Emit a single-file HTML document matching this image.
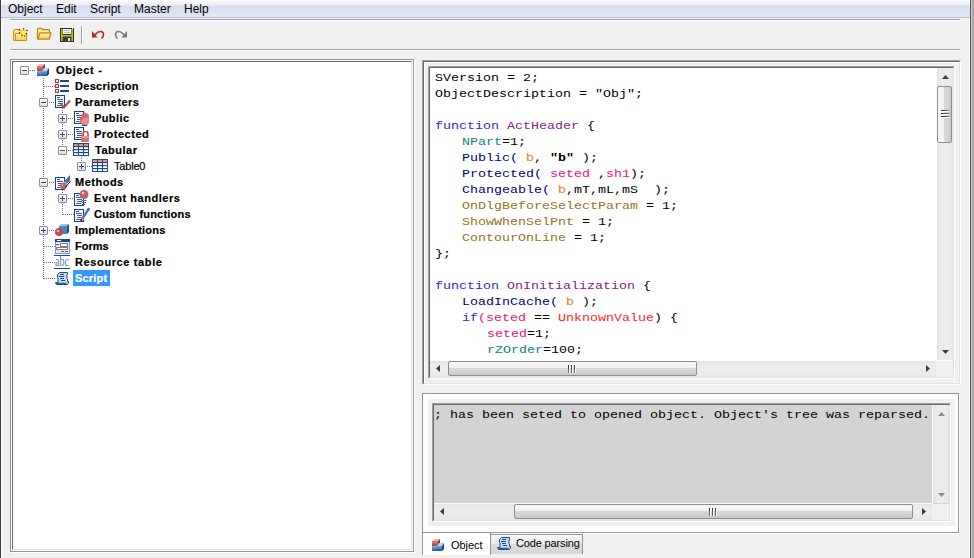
<!DOCTYPE html>
<html><head><meta charset="utf-8">
<style>
*{box-sizing:border-box;margin:0;padding:0}
html,body{width:974px;height:558px;overflow:hidden;background:#f0f0f0;position:relative;font-family:"Liberation Sans",sans-serif}
.a{position:absolute}
.menu{left:1px;top:0;width:969px;height:17px;background:linear-gradient(#fbfbfd 0px,#eceef7 5px,#d8ddee 6px,#dde2f2 11px,#e1e6f5 16px)}
.menub{left:1px;top:17px;width:969px;height:1px;background:#b9c0d2}
.mi{position:absolute;top:1px;font-size:12px;line-height:16px;color:#000;white-space:pre}
.sepg{background:#a0a0a0;height:1px}
.sepw{background:#fff;height:1px}
.sunk{border-style:solid;border-width:1px;border-color:#696969 #e3e3e3 #e3e3e3 #696969}
.sunko{border-style:solid;border-width:1px;border-color:#a0a0a0 #fff #fff #a0a0a0}
.code{font-family:"Liberation Mono",monospace;font-size:13.33px;line-height:16px;white-space:pre;color:#000}
.tr{position:absolute;font-size:11px;font-weight:bold;line-height:16px;white-space:pre;color:#000;letter-spacing:0;-webkit-text-stroke:0.2px currentColor}
.exp{position:absolute;width:9px;height:9px;border:1px solid #8f8f8f;border-radius:1px;background:linear-gradient(#fff,#f4f4f4 50%,#dcdcdc)}
.exp:before{content:"";position:absolute;left:1px;top:3px;width:5px;height:1px;background:#2c4b9a}
.exp.p:after{content:"";position:absolute;left:3px;top:1px;width:1px;height:5px;background:#2c4b9a}
.dv{position:absolute;width:1px;background-image:linear-gradient(#777 50%,transparent 50%);background-size:1px 2px}
.dh{position:absolute;height:1px;background-image:linear-gradient(90deg,#777 50%,transparent 50%);background-size:2px 1px}
.vtr{position:absolute;width:16px;background:linear-gradient(90deg,#e2e2e2 0,#e7e7e7 1px,#ebebeb 4px,#ececec 9px,#eaeaea 14px,#e4e4e4 16px)}
.htr{position:absolute;height:16px;background:linear-gradient(#e2e2e2 0,#e7e7e7 1px,#ebebeb 4px,#ececec 9px,#eaeaea 14px,#e4e4e4 16px)}
.vth{position:absolute;width:15px;border:1px solid #8e8e8e;border-radius:2px;background:linear-gradient(90deg,#f8f8f8 0,#efefef 45%,#d9d9d9 46%,#d0d0d0 85%,#c6c6c6 100%)}
.hth{position:absolute;height:15px;border:1px solid #8e8e8e;border-radius:2px;background:linear-gradient(#f8f8f8 0,#efefef 45%,#d9d9d9 46%,#d0d0d0 85%,#c6c6c6 100%)}
.gripv{position:absolute;width:8px;height:1px;background:linear-gradient(90deg,#2a2a2a,#7a7a7a);box-shadow:0 1px 0 #fff}
.griph{position:absolute;width:1px;height:8px;background:linear-gradient(#2a2a2a,#7a7a7a);box-shadow:1px 0 0 #fff}
.arr{position:absolute;overflow:visible}
.tab{position:absolute;font-size:11px;line-height:13px;white-space:pre;color:#000}
.ico{position:absolute;width:16px;height:16px;overflow:visible}
</style></head><body>
<svg width="0" height="0" style="position:absolute"><defs>
<linearGradient id="gr" x1="0" y1="0" x2="0" y2="1"><stop offset="0" stop-color="#d98484"/><stop offset="1" stop-color="#a84444"/></linearGradient>
<linearGradient id="gb" x1="0" y1="0" x2="0" y2="1"><stop offset="0" stop-color="#86b4e4"/><stop offset="1" stop-color="#28589c"/></linearGradient>
<linearGradient id="gb2" x1="0" y1="0" x2="0" y2="1"><stop offset="0" stop-color="#78a8dc"/><stop offset="1" stop-color="#1f4c90"/></linearGradient>
<linearGradient id="fy" x1="0" y1="0" x2="0" y2="1"><stop offset="0" stop-color="#fff3b8"/><stop offset="1" stop-color="#f4c94e"/></linearGradient>
</defs></svg>
<!-- window edges -->
<div class="a" style="left:0;top:0;width:1px;height:558px;background:#404040"></div>
<div class="a" style="left:1px;top:0;width:1px;height:558px;background:#fafafa"></div>
<div class="a" style="left:969px;top:0;width:1px;height:558px;background:#f6f6f6"></div>
<div class="a" style="left:970px;top:0;width:1px;height:558px;background:#5a5a5a"></div>
<div class="a" style="left:971px;top:0;width:1px;height:558px;background:#c8c8c8"></div>
<div class="a" style="left:972px;top:0;width:2px;height:558px;background:#a8a8a8"></div>

<!-- menu -->
<div class="a menu"></div>
<div class="a menub"></div>
<div class="mi" style="left:8px">Object</div>
<div class="mi" style="left:56px">Edit</div>
<div class="mi" style="left:90px">Script</div>
<div class="mi" style="left:134px">Master</div>
<div class="mi" style="left:184px">Help</div>

<!-- toolbar separators -->
<div class="a sepg" style="left:10px;top:19px;width:950px"></div>
<div class="a sepw" style="left:10px;top:20px;width:951px"></div>
<div class="a sepg" style="left:10px;top:49px;width:950px"></div>
<div class="a sepw" style="left:10px;top:50px;width:951px"></div>
<div class="a" style="left:81px;top:26px;width:1px;height:18px;background:#a0a0a0"></div>
<div class="a" style="left:82px;top:26px;width:1px;height:18px;background:#fff"></div>

<!-- TOOLBAR ICONS -->
<svg class="ico" style="left:12px;top:26px" viewBox="0 0 16 16"><path d="M1.5 14.5V5q0-1.5 1.5-1.5h3l1 1h4v10z" fill="#fbe39a" stroke="#c7901c"/><path d="M3.5 14.5V7.5h11v7z" fill="url(#fy)" stroke="#c7901c"/><path d="M11.5 3.5v6.5M8 6.5h7M9 4l5 5M14 4l-5 5" stroke="#ffe800" stroke-width="1.4"/><circle cx="11.5" cy="6.5" r="1.6" fill="#fff45a"/><circle cx="7.2" cy="3.6" r=".75" fill="#223"/><circle cx="11.5" cy="3" r=".75" fill="#223"/><circle cx="15" cy="4.5" r=".75" fill="#223"/><circle cx="14.5" cy="7.8" r=".75" fill="#223"/><circle cx="10" cy="9.6" r=".75" fill="#223"/><circle cx="12.6" cy="10" r=".7" fill="#445"/><circle cx="7.5" cy="6.8" r=".7" fill="#445"/></svg>
<svg class="ico" style="left:36px;top:25px" viewBox="0 0 16 16"><path d="M1.5 14V4.5q0-1.2 1.2-1.2h2.8l1.2 1.4h5.8q1 0 1 1V8" fill="#fde9a0" stroke="#c38a14" stroke-width="1.3"/><path d="M4 7.8h11l-1.8 6.4H1.8z" fill="url(#fy)" stroke="#c38a14" stroke-width="1.3" stroke-linejoin="round"/></svg>
<svg class="ico" style="left:59px;top:27px" viewBox="0 0 16 16"><rect x="1" y="1" width="14" height="14" fill="#2a2a2a"/><rect x="2" y="2" width="1.6" height="12" fill="#c4bd10"/><rect x="12.4" y="2" width="1.6" height="12" fill="#c4bd10"/><rect x="2" y="8" width="12" height="1.6" fill="#c4bd10"/><rect x="4" y="2" width="8" height="5" fill="#f2f6f6"/><path d="M5 3.5h6M5 5.5h6" stroke="#a9c4c8"/><rect x="4" y="10" width="8" height="5" fill="#3c3c3c"/><rect x="9" y="11" width="2" height="3" fill="#d8ecf0"/><rect x="13" y="1" width="1" height="1" fill="#eee"/></svg>
<svg class="ico" style="left:91px;top:27px" viewBox="0 0 16 16"><polygon points="1,4 1,10.5 6.5,10.5" fill="#b52a2a"/><path d="M4 8Q6.5 4.5 9.5 4.5Q12.5 4.5 12.5 7.5Q12.5 10 10.5 11.5" stroke="#b52a2a" stroke-width="1.6" fill="none"/></svg>
<svg class="ico" style="left:113px;top:27px" viewBox="0 0 16 16"><polygon points="14,4 14,10.5 8.5,10.5" fill="#777"/><path d="M11 8Q8.5 4.5 5.5 4.5Q2.5 4.5 2.5 7.5Q2.5 10 4.5 11.5" stroke="#808080" stroke-width="1.6" fill="none"/></svg>

<!-- tree panel -->
<div class="a" style="left:10px;top:59px;width:404px;height:493px;border:1px solid #8d95a2;background:#fff;box-shadow:1px 1px 0 #fff"></div>
<div class="a sunk" style="left:12px;top:61px;width:400px;height:489px;background:#fff"></div>

<!-- TREE -->
<div class="dv" style="left:43px;top:78px;height:201px"></div>
<div class="dv" style="left:62px;top:108px;height:43px"></div>
<div class="dv" style="left:62px;top:188px;height:27px"></div>
<div class="dv" style="left:81px;top:156px;height:11px"></div>
<div class="dh" style="left:30px;top:70px;width:6px"></div>
<div class="dh" style="left:44px;top:86px;width:11px"></div>
<div class="dh" style="left:49px;top:102px;width:6px"></div>
<div class="dh" style="left:68px;top:118px;width:6px"></div>
<div class="dh" style="left:68px;top:134px;width:6px"></div>
<div class="dh" style="left:68px;top:150px;width:6px"></div>
<div class="dh" style="left:87px;top:166px;width:6px"></div>
<div class="dh" style="left:49px;top:182px;width:6px"></div>
<div class="dh" style="left:68px;top:198px;width:6px"></div>
<div class="dh" style="left:63px;top:214px;width:11px"></div>
<div class="dh" style="left:49px;top:230px;width:6px"></div>
<div class="dh" style="left:44px;top:246px;width:11px"></div>
<div class="dh" style="left:44px;top:262px;width:11px"></div>
<div class="dh" style="left:44px;top:278px;width:11px"></div>
<div class="exp" style="left:20px;top:66px"></div>
<svg class="ico" style="left:36px;top:62px" viewBox="0 0 16 16"><polygon points="1,4 3,2 9,2 7,4" fill="#efb8b8"/><rect x="1" y="4" width="6" height="5" fill="url(#gr)"/><polygon points="7,4 9,2 9,7 7,9" fill="#8e3434"/><rect x="1" y="9" width="6" height="5" fill="url(#gb)"/><polygon points="6,9 8,6 13,6 11,9" fill="#b4d4f2"/><rect x="6" y="9" width="5" height="5" fill="url(#gb2)"/><polygon points="11,9 13,6 13,12 11,14" fill="#173f7e"/></svg>
<div class="tr" style="left:56px;top:62px;letter-spacing:0.71px;">Object -</div>
<svg class="ico" style="left:55px;top:78px" viewBox="0 0 16 16"><rect x="0.5" y="1.5" width="3" height="3" fill="#f4dede" stroke="#a63a3a"/><rect x="5" y="2" width="9" height="2" fill="#1f4a8a"/><rect x="0.5" y="6.5" width="3" height="3" fill="#f4dede" stroke="#a63a3a"/><rect x="5" y="7" width="9" height="2" fill="#1f4a8a"/><rect x="0.5" y="11.5" width="3" height="3" fill="#f4dede" stroke="#a63a3a"/><rect x="5" y="12" width="9" height="2" fill="#1f4a8a"/></svg>
<div class="tr" style="left:75px;top:78px;letter-spacing:0.3px;">Description</div>
<div class="exp" style="left:39px;top:98px"></div>
<svg class="ico" style="left:55px;top:94px" viewBox="0 0 16 16"><rect x="0.5" y="1.5" width="9" height="12" fill="#f4f8fd" stroke="#1d3d7c"/><path d="M2 3.5h3M2 5.5h6M3 7.5h5M3 9.5h5M2 11.5h5" stroke="#3461ad" fill="none"/><path d="M6 10l3 3.5 6-7" stroke="#b84a58" stroke-width="2" fill="none"/></svg>
<div class="tr" style="left:75px;top:94px;letter-spacing:0.44px;">Parameters</div>
<div class="exp p" style="left:58px;top:114px"></div>
<svg class="ico" style="left:74px;top:110px" viewBox="0 0 16 16"><rect x="0.5" y="1.5" width="9" height="12" fill="#f4f8fd" stroke="#1d3d7c"/><path d="M2 3.5h3M2 5.5h6M3 7.5h5M3 9.5h5M2 11.5h5" stroke="#3461ad" fill="none"/><path d="M6.5 9.5V7.5h1.5V10V4.5a.8.8 0 0 1 1.6 0V8V3.5a.8.8 0 0 1 1.6 0V8V4a.8.8 0 0 1 1.6 0V8V5a.8.8 0 0 1 1.6 0V12q0 2.5-2 3H9q-2-.5-2.5-3z" fill="#ea8c8c" stroke="#c85656" stroke-width="0.7"/><rect x="8" y="15" width="5" height="1" fill="#1f4a8a"/></svg>
<div class="tr" style="left:94px;top:110px;letter-spacing:0.4px;">Public</div>
<div class="exp p" style="left:58px;top:130px"></div>
<svg class="ico" style="left:74px;top:126px" viewBox="0 0 16 16"><rect x="0.5" y="1.5" width="9" height="12" fill="#f4f8fd" stroke="#1d3d7c"/><path d="M2 3.5h3M2 5.5h6M3 7.5h5M3 9.5h5M2 11.5h5" stroke="#3461ad" fill="none"/><path d="M9 10.5V8a2.5 2.5 0 0 1 5 0v2.5" stroke="#c25a5a" stroke-width="1.7" fill="none"/><rect x="7" y="10" width="8" height="6" rx="1" fill="#d97474"/><rect x="7" y="10" width="8" height="2" fill="#e89696"/></svg>
<div class="tr" style="left:94px;top:126px;letter-spacing:0.5px;">Protected</div>
<div class="exp" style="left:58px;top:146px"></div>
<svg class="ico" style="left:74px;top:142px" viewBox="0 0 16 16"><rect x="-1" y="1" width="16" height="13" fill="#1f4a8a"/><rect x="0" y="2" width="4" height="2" fill="#f28a7e"/><rect x="5" y="2" width="4" height="2" fill="#f28a7e"/><rect x="10" y="2" width="4" height="2" fill="#f28a7e"/><rect x="0" y="5" width="4" height="1" fill="#cfe0f3"/><rect x="0" y="6" width="4" height="1" fill="#fff"/><rect x="5" y="5" width="4" height="1" fill="#cfe0f3"/><rect x="5" y="6" width="4" height="1" fill="#fff"/><rect x="10" y="5" width="4" height="1" fill="#cfe0f3"/><rect x="10" y="6" width="4" height="1" fill="#fff"/><rect x="0" y="8" width="4" height="1" fill="#cfe0f3"/><rect x="0" y="9" width="4" height="1" fill="#fff"/><rect x="5" y="8" width="4" height="1" fill="#cfe0f3"/><rect x="5" y="9" width="4" height="1" fill="#fff"/><rect x="10" y="8" width="4" height="1" fill="#cfe0f3"/><rect x="10" y="9" width="4" height="1" fill="#fff"/><rect x="0" y="11" width="4" height="1" fill="#cfe0f3"/><rect x="0" y="12" width="4" height="1" fill="#fff"/><rect x="5" y="11" width="4" height="1" fill="#cfe0f3"/><rect x="5" y="12" width="4" height="1" fill="#fff"/><rect x="10" y="11" width="4" height="1" fill="#cfe0f3"/><rect x="10" y="12" width="4" height="1" fill="#fff"/></svg>
<div class="tr" style="left:95px;top:142px;letter-spacing:0.5px;">Tabular</div>
<div class="exp p" style="left:77px;top:162px"></div>
<svg class="ico" style="left:93px;top:158px" viewBox="0 0 16 16"><rect x="-1" y="1" width="16" height="13" fill="#1f4a8a"/><rect x="0" y="2" width="4" height="2" fill="#f28a7e"/><rect x="5" y="2" width="4" height="2" fill="#f28a7e"/><rect x="10" y="2" width="4" height="2" fill="#f28a7e"/><rect x="0" y="5" width="4" height="1" fill="#cfe0f3"/><rect x="0" y="6" width="4" height="1" fill="#fff"/><rect x="5" y="5" width="4" height="1" fill="#cfe0f3"/><rect x="5" y="6" width="4" height="1" fill="#fff"/><rect x="10" y="5" width="4" height="1" fill="#cfe0f3"/><rect x="10" y="6" width="4" height="1" fill="#fff"/><rect x="0" y="8" width="4" height="1" fill="#cfe0f3"/><rect x="0" y="9" width="4" height="1" fill="#fff"/><rect x="5" y="8" width="4" height="1" fill="#cfe0f3"/><rect x="5" y="9" width="4" height="1" fill="#fff"/><rect x="10" y="8" width="4" height="1" fill="#cfe0f3"/><rect x="10" y="9" width="4" height="1" fill="#fff"/><rect x="0" y="11" width="4" height="1" fill="#cfe0f3"/><rect x="0" y="12" width="4" height="1" fill="#fff"/><rect x="5" y="11" width="4" height="1" fill="#cfe0f3"/><rect x="5" y="12" width="4" height="1" fill="#fff"/><rect x="10" y="11" width="4" height="1" fill="#cfe0f3"/><rect x="10" y="12" width="4" height="1" fill="#fff"/></svg>
<div class="tr" style="left:114px;top:158px;letter-spacing:-0.2px;font-weight:normal;">Table0</div>
<div class="exp" style="left:39px;top:178px"></div>
<svg class="ico" style="left:55px;top:174px" viewBox="0 0 16 16"><rect x="0.5" y="3.5" width="9" height="12" fill="#f4f8fd" stroke="#1d3d7c"/><path d="M2 5.5h3M2 7.5h6M3 9.5h5M3 11.5h5M2 13.5h5" stroke="#3461ad" fill="none"/><path d="M15 1L15 6.5L12 9.5L9.5 7z" fill="#3d6cb4"/><path d="M9.5 7L12 9.5L10.5 11L8 8.5z" fill="#3cc4c8"/><path d="M8 8.5L10.5 11L9.5 12L7 9.5z" fill="#eef6f6"/><circle cx="8.5" cy="12" r="3.2" fill="#c65e5e"/><circle cx="7.5" cy="11" r="1" fill="#e9a0a0"/><path d="M10.5 13.5L15.5 7" stroke="#111" stroke-width="1"/></svg>
<div class="tr" style="left:75px;top:174px;letter-spacing:0.5px;">Methods</div>
<div class="exp p" style="left:58px;top:194px"></div>
<svg class="ico" style="left:74px;top:190px" viewBox="0 0 16 16"><rect x="0.5" y="3.5" width="9" height="12" fill="#f4f8fd" stroke="#1d3d7c"/><path d="M2 5.5h3M2 7.5h6M3 9.5h5M3 11.5h5M2 13.5h5" stroke="#3461ad" fill="none"/><path d="M7.5 10.5h5M7.5 12.5h4.5M8 14.5h3" stroke="#3d6db0" stroke-width="1.2"/><circle cx="10" cy="4.5" r="4.5" fill="#c46262"/><circle cx="9" cy="3" r="1.3" fill="#f4d0d0"/></svg>
<div class="tr" style="left:94px;top:190px;letter-spacing:0.54px;">Event handlers</div>
<svg class="ico" style="left:74px;top:206px" viewBox="0 0 16 16"><rect x="0.5" y="3.5" width="9" height="12" fill="#f4f8fd" stroke="#1d3d7c"/><path d="M2 5.5h3M2 7.5h6M3 9.5h5M3 11.5h5M2 13.5h5" stroke="#3461ad" fill="none"/><path d="M7 12.5L14 1.5L16 3L9 14z" fill="#4a78b8"/><path d="M14 1.5L16 3L16 4.5z" fill="#2a4f8a"/><path d="M7 12.5L9 14L6.2 15.5z" fill="#111"/><path d="M7.3 11L10 13.2L9 14.5L6.5 12.3z" fill="#f08888"/></svg>
<div class="tr" style="left:94px;top:206px;letter-spacing:0.2px;">Custom functions</div>
<div class="exp p" style="left:39px;top:226px"></div>
<svg class="ico" style="left:55px;top:222px" viewBox="0 0 16 16"><polygon points="4,4 6,2 14,2 12,4" fill="#9ec2ea"/><rect x="4" y="4" width="8" height="8" fill="#4f82c0"/><polygon points="12,4 14,2 14,10 12,12" fill="#21508f"/><circle cx="4" cy="10" r="4" fill="#b44c4c"/><circle cx="3" cy="9" r="1.3" fill="#eaa8a8"/></svg>
<div class="tr" style="left:75px;top:222px;letter-spacing:0.21px;">Implementations</div>
<svg class="ico" style="left:55px;top:238px" viewBox="0 0 16 16"><rect x="0.5" y="1.5" width="14" height="14" fill="#dfe7f3" stroke="#7b9dcc"/><rect x="0" y="1" width="15" height="3" fill="#1f4a8a"/><rect x="2" y="2" width="4" height="1" fill="#fff"/><path d="M1 6.5h3M6 13.5h3M10 13.5h3" stroke="#c33" fill="none"/><rect x="5.5" y="5.5" width="7" height="3" fill="#fff" stroke="#808080"/><rect x="1.5" y="9.5" width="11" height="2" fill="#fff" stroke="#808080"/></svg>
<div class="tr" style="left:75px;top:238px;letter-spacing:0px;">Forms</div>
<svg class="ico" style="left:55px;top:254px" viewBox="0 0 16 16"><rect x="-1" y="1" width="16" height="1" fill="#1f4a8a"/><text x="0" y="11.5" font-family="Liberation Serif" font-size="15" fill="#5a7db3" textLength="14" lengthAdjust="spacingAndGlyphs">abc</text><rect x="-1" y="14" width="16" height="1" fill="#1f4a8a"/></svg>
<div class="tr" style="left:75px;top:254px;letter-spacing:0.62px;">Resource table</div>
<svg class="ico" style="left:55px;top:270px" viewBox="0 0 16 16"><path d="M4.5 2.5h8v2h-.5v4l.5.5v2.5h1v1.5l-1 1.5h-11l-1-2h2.5v-4.5l-.5-.5v-3z" fill="#c6dbf2" stroke="#1f4a8a"/><path d="M5 4.5h4M4 6.5h5M5 8.5h4M6 10.5h4" stroke="#1f4a8a" fill="none"/><path d="M1.5 13.5h10" stroke="#2f5ea6" stroke-width="1.5"/></svg>
<div class="a" style="left:73px;top:270px;width:37px;height:16px;background:#3399ff"></div>
<div class="tr" style="left:75px;top:270px;letter-spacing:0.2px;color:#fff;">Script</div>
<!-- editor -->
<div class="a sunko" style="left:422px;top:60px;width:539px;height:325px"></div>
<div class="a sunk" style="left:423px;top:61px;width:537px;height:323px;border-right-color:#e3e3e3;border-bottom-color:#e3e3e3"></div>
<div class="a" style="left:424px;top:62px;width:535px;height:321px;border-left:1px solid #fff;border-top:1px solid #fff"></div>
<div class="a sunko" style="left:428px;top:66px;width:527px;height:313px"></div>
<div class="a sunk" style="left:429px;top:67px;width:525px;height:311px;background:#fff"></div>

<!-- EDITOR CONTENT -->
<div class="a" style="left:430px;top:68px;width:506px;height:293px;overflow:hidden;background:#fff">
<div class="a code" style="left:5px;top:2px;transform:scaleY(0.88);transform-origin:0 12px">SVersion = 2;</div>
<div class="a code" style="left:5px;top:18px;transform:scaleY(0.88);transform-origin:0 12px">ObjectDescription = "Obj";</div>
<div class="a code" style="left:5px;top:34px;transform:scaleY(0.88);transform-origin:0 12px"></div>
<div class="a code" style="left:5px;top:50px;transform:scaleY(0.88);transform-origin:0 12px"><span style="color:#2a2ad8">function</span> <span style="color:#86218a">ActHeader</span> <span style="color:#000">{</span></div>
<div class="a code" style="left:32px;top:66px;transform:scaleY(0.88);transform-origin:0 12px"><span style="color:#148080">NPart</span>=1;</div>
<div class="a code" style="left:32px;top:82px;transform:scaleY(0.88);transform-origin:0 12px"><span style="color:#000080">Public(</span> <span style="color:#f07818">b</span>, <span style="color:#000;font-weight:bold">"b"</span> );</div>
<div class="a code" style="left:32px;top:98px;transform:scaleY(0.88);transform-origin:0 12px"><span style="color:#000080">Protected(</span> <span style="color:#f00c80">seted</span> ,<span style="color:#f00c80">sh1</span>);</div>
<div class="a code" style="left:32px;top:114px;transform:scaleY(0.88);transform-origin:0 12px"><span style="color:#000080">Changeable(</span> <span style="color:#f07818">b</span>,mT,mL,mS  );</div>
<div class="a code" style="left:32px;top:130px;transform:scaleY(0.88);transform-origin:0 12px"><span style="color:#94741f">OnDlgBeforeSelectParam</span> = 1;</div>
<div class="a code" style="left:32px;top:146px;transform:scaleY(0.88);transform-origin:0 12px"><span style="color:#94741f">ShowWhenSelPnt</span> = 1;</div>
<div class="a code" style="left:32px;top:162px;transform:scaleY(0.88);transform-origin:0 12px"><span style="color:#94741f">ContourOnLine</span> = 1;</div>
<div class="a code" style="left:5px;top:178px;transform:scaleY(0.88);transform-origin:0 12px">};</div>
<div class="a code" style="left:5px;top:194px;transform:scaleY(0.88);transform-origin:0 12px"></div>
<div class="a code" style="left:5px;top:210px;transform:scaleY(0.88);transform-origin:0 12px"><span style="color:#2a2ad8">function</span> <span style="color:#86218a">OnInitialization</span> <span style="color:#000">{</span></div>
<div class="a code" style="left:32px;top:226px;transform:scaleY(0.88);transform-origin:0 12px"><span style="color:#000080">LoadInCache(</span> <span style="color:#f07818">b</span> );</div>
<div class="a code" style="left:32px;top:242px;transform:scaleY(0.88);transform-origin:0 12px"><span style="color:#2a2ad8">if</span><span style="color:#f00c80">(seted</span> == <span style="color:#ff2424">UnknownValue</span>) <span style="color:#000">{</span></div>
<div class="a code" style="left:57px;top:258px;transform:scaleY(0.88);transform-origin:0 12px"><span style="color:#f00c80">seted</span>=1;</div>
<div class="a code" style="left:57px;top:274px;transform:scaleY(0.88);transform-origin:0 12px"><span style="color:#148080">rZOrder</span>=100;</div>
</div>
<div class="vtr" style="left:937px;top:68px;height:292px"></div>
<div class="htr" style="left:430px;top:361px;width:506px"></div>
<div class="a" style="left:936px;top:361px;width:17px;height:16px;background:#f0f0f0"></div>
<svg class="arr" style="left:942px;top:75px" width="7" height="4"><polygon points="0,4 3.5,0 7,4" fill="#3c3c3c"/></svg>
<svg class="arr" style="left:942px;top:350px" width="7" height="4"><polygon points="0,0 7,0 3.5,4" fill="#3c3c3c"/></svg>
<svg class="arr" style="left:436px;top:365px" width="4" height="7"><polygon points="4,0 4,7 0,3.5" fill="#3c3c3c"/></svg>
<svg class="arr" style="left:926px;top:365px" width="4" height="7"><polygon points="0,0 4,3.5 0,7" fill="#3c3c3c"/></svg>
<div class="vth" style="left:937px;top:86px;height:57px;width:15px"></div>
<div class="gripv" style="left:941px;top:110px"></div>
<div class="gripv" style="left:941px;top:113px"></div>
<div class="gripv" style="left:941px;top:116px"></div>
<div class="hth" style="left:448px;top:361px;width:249px"></div>
<div class="griph" style="left:568px;top:365px"></div>
<div class="griph" style="left:571px;top:365px"></div>
<div class="griph" style="left:574px;top:365px"></div>
<div class="a" style="left:936px;top:68px;width:1px;height:293px;background:#fff"></div>
<div class="a" style="left:430px;top:360px;width:507px;height:1px;background:#fff"></div>
<!-- output -->
<div class="a" style="left:422px;top:393px;width:537px;height:140px;border:1px solid #8d95a2;background:#fff;box-shadow:1px 1px 0 #fff"></div>
<div class="a" style="left:428px;top:399px;width:527px;height:127px;background:#f0f0f0"></div>
<div class="a sunko" style="left:432px;top:403px;width:519px;height:119px"></div>
<div class="a sunk" style="left:433px;top:404px;width:517px;height:117px;background:#d3d3d3"></div>

<!-- OUTPUT CONTENT -->
<div class="a" style="left:434px;top:405px;width:498px;height:98px;overflow:hidden;background:#d3d3d3">
<div class="a code" style="left:0px;top:2px;transform:scaleY(0.88);transform-origin:0 12px">; has been seted to opened object. Object's tree was reparsed.</div></div>
<div class="a" style="left:932px;top:405px;width:1px;height:98px;background:#fff"></div>
<div class="a" style="left:434px;top:503px;width:499px;height:1px;background:#fff"></div>
<div class="vtr" style="left:933px;top:405px;height:98px"></div>
<div class="htr" style="left:434px;top:504px;width:498px"></div>
<div class="a" style="left:932px;top:504px;width:17px;height:16px;background:#f0f0f0"></div>
<svg class="arr" style="left:938px;top:412px" width="7" height="4"><polygon points="0,4 3.5,0 7,4" fill="#8a8a8a"/></svg>
<svg class="arr" style="left:938px;top:493px" width="7" height="4"><polygon points="0,0 7,0 3.5,4" fill="#8a8a8a"/></svg>
<svg class="arr" style="left:440px;top:508px" width="4" height="7"><polygon points="4,0 4,7 0,3.5" fill="#3c3c3c"/></svg>
<svg class="arr" style="left:922px;top:508px" width="4" height="7"><polygon points="0,0 4,3.5 0,7" fill="#3c3c3c"/></svg>
<div class="hth" style="left:514px;top:504px;width:399px"></div>
<div class="griph" style="left:709px;top:508px"></div>
<div class="griph" style="left:712px;top:508px"></div>
<div class="griph" style="left:715px;top:508px"></div>

<!-- TABS -->
<div class="a" style="left:422px;top:532px;width:69px;height:23px;border-left:1px solid #8d95a2;border-right:1px solid #8d95a2;background:#fff"></div>
<div class="a" style="left:422px;top:532px;width:69px;height:1px;background:#8d95a2"></div>
<div class="a" style="left:491px;top:534px;width:92px;height:20px;border:1px solid #8d95a2;border-left:0;border-bottom:0;background:linear-gradient(#f6f6f6,#ebebeb 45%,#dcdcdc 50%,#d6d6d6)"></div>
<div class="a" style="left:491px;top:535px;width:91px;height:1px;background:#fff"></div>
<svg class="ico" style="left:431px;top:537px" viewBox="0 0 16 16"><polygon points="1,4 3,2 9,2 7,4" fill="#efb8b8"/><rect x="1" y="4" width="6" height="5" fill="url(#gr)"/><polygon points="7,4 9,2 9,7 7,9" fill="#8e3434"/><rect x="1" y="9" width="6" height="5" fill="url(#gb)"/><polygon points="6,9 8,6 13,6 11,9" fill="#b4d4f2"/><rect x="6" y="9" width="5" height="5" fill="url(#gb2)"/><polygon points="11,9 13,6 13,12 11,14" fill="#173f7e"/></svg>
<svg class="ico" style="left:497px;top:535px" viewBox="0 0 16 16"><path d="M4.5 2.5h8v2h-.5v4l.5.5v2.5h1v1.5l-1 1.5h-11l-1-2h2.5v-4.5l-.5-.5v-3z" fill="#c6dbf2" stroke="#1f4a8a"/><path d="M5 4.5h4M4 6.5h5M5 8.5h4M6 10.5h4" stroke="#1f4a8a" fill="none"/><path d="M1.5 13.5h10" stroke="#2f5ea6" stroke-width="1.5"/></svg>
<div class="tab" style="left:451px;top:539px;letter-spacing:-0.05px">Object</div>
<div class="tab" style="left:516px;top:537px;letter-spacing:-0.15px">Code parsing</div>

</body></html>
